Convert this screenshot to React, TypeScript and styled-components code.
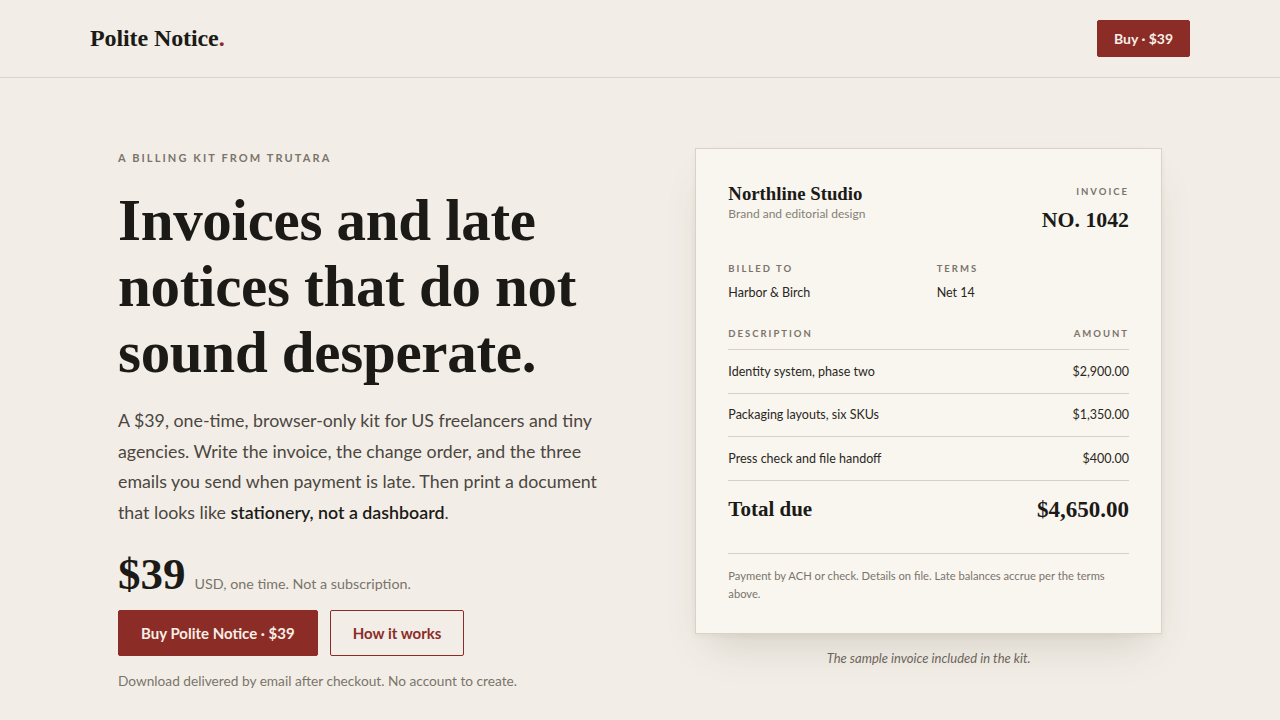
import React from 'react';
import styled, { createGlobalStyle } from 'styled-components';

const serif = `"Liberation Serif", "Times New Roman", serif`;
const sans = `Lato, "Noto Sans", "Liberation Sans", sans-serif`;

const GlobalStyle = createGlobalStyle`
  html, body {
    margin: 0;
    padding: 0;
    background: #f2eee7;
    color: #1c1a17;
    font-family: ${sans};
  }
  * { box-sizing: border-box; }
`;

const Header = styled.header`
  border-bottom: 1px solid #d9d3c8;
`;

const HeaderInner = styled.div`
  max-width: 1100px;
  height: 77px;
  margin: 0 auto;
  display: flex;
  align-items: center;
  justify-content: space-between;
`;

const Logo = styled.div`
  font-family: ${serif};
  font-weight: 700;
  font-size: 24px;
  letter-spacing: -0.1px;
  color: #1c1a17;

  span {
    color: #8b2c27;
  }
`;

const Button = styled.a<{ $variant?: 'primary' | 'ghost'; $size?: 'sm' | 'lg' }>`
  display: inline-flex;
  align-items: center;
  justify-content: center;
  font-family: ${sans};
  font-weight: 700;
  text-decoration: none;
  border-radius: 2px;
  border: 1px solid #8b2c27;
  background: ${(p) => (p.$variant === 'ghost' ? 'transparent' : '#8b2c27')};
  color: ${(p) => (p.$variant === 'ghost' ? '#8b2c27' : '#f7efe6')};
  height: ${(p) => (p.$size === 'sm' ? '37px' : '46px')};
  padding: ${(p) => (p.$size === 'sm' ? '0 16px' : '0 22px')};
  font-size: ${(p) => (p.$size === 'sm' ? '14px' : '15px')};
`;

const Main = styled.main`
  max-width: 1044px;
  margin: 0 auto;
  padding-top: 70px;
  display: grid;
  grid-template-columns: 1.1fr 1fr;
  column-gap: 64px;
  align-items: start;
`;

const Eyebrow = styled.div`
  font-size: 11px;
  font-weight: 700;
  letter-spacing: 2.1px;
  color: #7a746b;
  text-transform: uppercase;
  margin-top: 3px;
`;

const Headline = styled.h1`
  font-family: ${serif};
  font-weight: 700;
  font-size: 59px;
  line-height: 66px;
  letter-spacing: -0.3px;
  margin: 23px 0 0;
  color: #1c1a17;
`;

const Lede = styled.p`
  font-size: 17.8px;
  line-height: 30.5px;
  color: #4b4640;
  margin: 20px 0 0;
  max-width: 500px;

  strong {
    color: #1c1a17;
    font-weight: 600;
  }
`;

const PriceRow = styled.div`
  display: flex;
  align-items: baseline;
  gap: 9px;
  margin-top: 25px;
`;

const Price = styled.span`
  font-family: ${serif};
  font-weight: 700;
  font-size: 45px;
  line-height: 44px;
  color: #1c1a17;
`;

const PriceNote = styled.span`
  font-size: 14.3px;
  color: #7a746b;
`;

const Actions = styled.div`
  display: flex;
  gap: 12px;
  margin-top: 14px;
`;

const Fine = styled.p`
  font-size: 13.7px;
  color: #7a746b;
  margin: 16px 0 0;
`;

const Figure = styled.figure`
  margin: 0;
`;

const Card = styled.div`
  background: #f9f6f0;
  border: 1px solid #d9d3c7;
  padding: 33px 32px 30px;
  box-shadow: 0 22px 40px -14px rgba(70, 55, 35, 0.18), 0 2px 6px rgba(70, 55, 35, 0.05);
`;

const CardTop = styled.div`
  display: flex;
  justify-content: space-between;
  align-items: flex-start;
`;

const Studio = styled.div`
  font-family: ${serif};
  font-weight: 700;
  font-size: 18.8px;
  line-height: 24px;
`;

const Sub = styled.div`
  font-size: 12px;
  color: #857f75;
`;

const Label = styled.div<{ $align?: 'right' }>`
  font-size: 9.5px;
  font-weight: 700;
  letter-spacing: 2px;
  color: #7a746b;
  text-transform: uppercase;
  text-align: ${(p) => p.$align || 'left'};
`;

const InvoiceNo = styled.div`
  font-family: ${serif};
  font-weight: 700;
  font-size: 21.8px;
  line-height: 26px;
  margin-top: 10px;
  text-align: right;
`;

const InvoiceMeta = styled.div`
  padding-top: 4px;
`;

const Meta = styled.div`
  display: grid;
  grid-template-columns: 1fr 1fr;
  column-gap: 16px;
  margin-top: 30px;
`;

const MetaValue = styled.div`
  font-size: 12.5px;
  color: #2a2622;
  margin-top: 11px;
`;

const Table = styled.div`
  margin-top: 28px;
`;

const Row = styled.div<{ $head?: boolean }>`
  display: flex;
  justify-content: space-between;
  border-bottom: 1px solid #d6d0c5;
  height: ${(p) => (p.$head ? '22px' : '43.5px')};
  align-items: ${(p) => (p.$head ? 'flex-start' : 'center')};
  font-size: 12.5px;
  color: #2a2622;
`;

const Total = styled.div`
  display: flex;
  justify-content: space-between;
  align-items: center;
  height: 58px;
  padding-bottom: 14px;
  box-sizing: content-box;
  border-bottom: 1px solid #d6d0c5;
  font-family: ${serif};
  font-weight: 700;
  font-size: 21px;
`;

const TotalAmount = styled.span`
  font-size: 23px;
`;

const Terms = styled.p`
  font-size: 11.2px;
  line-height: 18px;
  color: #7a746b;
  margin: 13px 0 0;
`;

const Caption = styled.figcaption`
  font-style: italic;
  font-size: 13px;
  color: #6b655c;
  text-align: center;
  margin-top: 16px;
`;

const items = [
  { desc: 'Identity system, phase two', amount: '$2,900.00' },
  { desc: 'Packaging layouts, six SKUs', amount: '$1,350.00' },
  { desc: 'Press check and file handoff', amount: '$400.00' },
];

export default function App() {
  return (
    <>
      <GlobalStyle />
      <Header>
        <HeaderInner>
          <Logo>
            Polite Notice<span>.</span>
          </Logo>
          <Button $size="sm" href="#buy">Buy · $39</Button>
        </HeaderInner>
      </Header>
      <Main>
        <section>
          <Eyebrow>A billing kit from Trutara</Eyebrow>
          <Headline>Invoices and late notices that do not sound desperate.</Headline>
          <Lede>
            A $39, one-time, browser-only kit for US freelancers and tiny agencies. Write the invoice, the
            change order, and the three emails you send when payment is late. Then print a document that
            looks like <strong>stationery, not a dashboard</strong>.
          </Lede>
          <PriceRow>
            <Price>$39</Price>
            <PriceNote>USD, one time. Not a subscription.</PriceNote>
          </PriceRow>
          <Actions>
            <Button href="#buy">Buy Polite Notice · $39</Button>
            <Button $variant="ghost" href="#how">How it works</Button>
          </Actions>
          <Fine>Download delivered by email after checkout. No account to create.</Fine>
        </section>
        <Figure>
          <Card>
            <CardTop>
              <div>
                <Studio>Northline Studio</Studio>
                <Sub>Brand and editorial design</Sub>
              </div>
              <InvoiceMeta>
                <Label $align="right">Invoice</Label>
                <InvoiceNo>NO. 1042</InvoiceNo>
              </InvoiceMeta>
            </CardTop>
            <Meta>
              <div>
                <Label>Billed to</Label>
                <MetaValue>Harbor &amp; Birch</MetaValue>
              </div>
              <div>
                <Label>Terms</Label>
                <MetaValue>Net 14</MetaValue>
              </div>
            </Meta>
            <Table>
              <Row $head>
                <Label>Description</Label>
                <Label $align="right">Amount</Label>
              </Row>
              {items.map((it) => (
                <Row key={it.desc}>
                  <span>{it.desc}</span>
                  <span>{it.amount}</span>
                </Row>
              ))}
              <Total>
                <span>Total due</span>
                <TotalAmount>$4,650.00</TotalAmount>
              </Total>
            </Table>
            <Terms>Payment by ACH or check. Details on file. Late balances accrue per the terms above.</Terms>
          </Card>
          <Caption>The sample invoice included in the kit.</Caption>
        </Figure>
      </Main>
    </>
  );
}
